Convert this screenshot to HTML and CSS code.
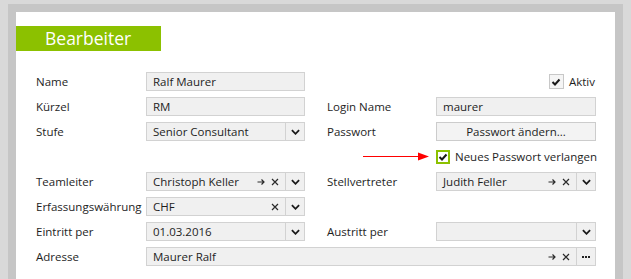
FILE: index.html
```html
<!DOCTYPE html>
<html lang="de">

<head>
    <meta charset="UTF-8">
    <title>Bearbeiter</title>
    <link rel="stylesheet" href="styles.css">
</head>

<body>
    <div class="panel">
        <div class="ribbon">Bearbeiter</div>

        <div class="form">
            <!-- Zeile 1 -->
            <div class="label">Name</div>
            <div class="field">Ralf Maurer</div>
            <div></div>
            <label class="check right">
                <span class="box"><svg viewBox="0 0 10 10"><polyline points="1.5,5 4,7.5 8.5,2.5"></polyline></svg></span>
                Aktiv
            </label>

            <!-- Zeile 2 -->
            <div class="label">Kürzel</div>
            <div class="field">RM</div>
            <div class="label side">Login Name</div>
            <div class="field">maurer</div>

            <!-- Zeile 3 -->
            <div class="label">Stufe</div>
            <div class="field combo">
                <span class="value">Senior Consultant</span>
                <span class="drop"><svg viewBox="0 0 10 6"><polyline points="1,1 5,5 9,1"></polyline></svg></span>
            </div>
            <div class="label side">Passwort</div>
            <div class="button">Passwort ändern...</div>

            <!-- Zeile 4 -->
            <div></div>
            <div></div>
            <div class="pointer">
                <svg width="66" height="9" viewBox="0 0 66 9">
                    <line x1="0" y1="4.5" x2="56" y2="4.5"></line>
                    <polygon points="55,0.5 66,4.5 55,8.5"></polygon>
                </svg>
            </div>
            <label class="check">
                <span class="box marked"><svg viewBox="0 0 10 10"><polyline points="1.5,5 4,7.5 8.5,2.5"></polyline></svg></span>
                Neues Passwort verlangen
            </label>

            <!-- Zeile 5 -->
            <div class="label">Teamleiter</div>
            <div class="field combo">
                <span class="value">Christoph Keller</span>
                <span class="icon go"><svg viewBox="0 0 8 8"><path d="M0.5 4H7M4.5 1.5L7 4L4.5 6.5"></path></svg></span>
                <span class="icon clear"><svg viewBox="0 0 8 8"><path d="M1 1L7 7M7 1L1 7"></path></svg></span>
                <span class="drop"><svg viewBox="0 0 10 6"><polyline points="1,1 5,5 9,1"></polyline></svg></span>
            </div>
            <div class="label side">Stellvertreter</div>
            <div class="field combo">
                <span class="value">Judith Feller</span>
                <span class="icon go"><svg viewBox="0 0 8 8"><path d="M0.5 4H7M4.5 1.5L7 4L4.5 6.5"></path></svg></span>
                <span class="icon clear"><svg viewBox="0 0 8 8"><path d="M1 1L7 7M7 1L1 7"></path></svg></span>
                <span class="drop"><svg viewBox="0 0 10 6"><polyline points="1,1 5,5 9,1"></polyline></svg></span>
            </div>

            <!-- Zeile 6 -->
            <div class="label">Erfassungswährung</div>
            <div class="field combo">
                <span class="value">CHF</span>
                <span class="icon clear"><svg viewBox="0 0 8 8"><path d="M1 1L7 7M7 1L1 7"></path></svg></span>
                <span class="drop"><svg viewBox="0 0 10 6"><polyline points="1,1 5,5 9,1"></polyline></svg></span>
            </div>
            <div></div>
            <div></div>

            <!-- Zeile 7 -->
            <div class="label">Eintritt per</div>
            <div class="field combo">
                <span class="value">01.03.2016</span>
                <span class="drop"><svg viewBox="0 0 10 6"><polyline points="1,1 5,5 9,1"></polyline></svg></span>
            </div>
            <div class="label side">Austritt per</div>
            <div class="field combo">
                <span class="value"></span>
                <span class="drop"><svg viewBox="0 0 10 6"><polyline points="1,1 5,5 9,1"></polyline></svg></span>
            </div>

            <!-- Zeile 8 -->
            <div class="label">Adresse</div>
            <div class="field combo wide">
                <span class="value">Maurer Ralf</span>
                <span class="icon go"><svg viewBox="0 0 8 8"><path d="M0.5 4H7M4.5 1.5L7 4L4.5 6.5"></path></svg></span>
                <span class="icon clear"><svg viewBox="0 0 8 8"><path d="M1 1L7 7M7 1L1 7"></path></svg></span>
                <span class="drop dots"><svg viewBox="0 0 8 2"><rect x="0" y="0" width="2" height="2"></rect><rect x="3" y="0" width="2" height="2"></rect><rect x="6" y="0" width="2" height="2"></rect></svg></span>
            </div>
        </div>
    </div>
</body>

</html>
```

FILE: styles.css
```css
html,
body {
    height: 100%;
}

body {
    margin: 0;
    background: #d9d9d9;
    font-family: 'Open Sans', 'Noto Sans', sans-serif;
    font-size: 11.5px;
    color: #1e1e1e;
}

.panel {
    box-sizing: border-box;
    height: calc(100% - 4px);
    margin: 4px 8px 0 8px;
    border: 8px solid #c6c6c6;
    border-bottom: none;
    background: #ffffff;
    overflow: hidden;
}

.ribbon {
    position: relative;
    width: 150px;
    height: 25px;
    margin: 14px 0 0 -5px;
    padding-left: 34px;
    box-sizing: border-box;
    background: #8cc100;
    color: #ffffff;
    font-size: 17.5px;
    line-height: 25px;
}

.ribbon::after {
    content: "";
    position: absolute;
    left: 0;
    bottom: -5px;
    border-top: 5px solid #4d6a00;
    border-left: 5px solid transparent;
}

.form {
    display: grid;
    grid-template-columns: 110px 159px 131px 160px;
    grid-auto-rows: 19px;
    row-gap: 6px;
    margin: 21px 0 0 20px;
}

.label {
    display: flex;
    align-items: center;
    white-space: nowrap;
}

.label.side {
    padding-left: 22px;
}

.field {
    display: flex;
    align-items: center;
    box-sizing: border-box;
    height: 19px;
    padding-left: 6px;
    background: #f0f0f0;
    border: 1px solid #d2d2d2;
    white-space: nowrap;
}

.field.wide {
    grid-column: 2 / 5;
}

.combo .value {
    flex: 1;
}

.icon {
    display: flex;
    align-items: center;
    justify-content: center;
    width: 8px;
    margin-right: 6px;
}

.icon svg {
    width: 8px;
    height: 8px;
    fill: none;
    stroke: #2a2a2a;
    stroke-width: 1.2;
}

.drop {
    display: flex;
    align-items: center;
    justify-content: center;
    width: 18px;
    height: 100%;
    border-left: 1px solid #d2d2d2;
}

.drop svg {
    width: 9px;
    height: 6px;
    fill: none;
    stroke: #1a1a1a;
    stroke-width: 2;
}

.drop.dots svg {
    width: 8px;
    height: 2px;
    fill: #222222;
    stroke: none;
}

.button {
    display: flex;
    align-items: center;
    justify-content: center;
    box-sizing: border-box;
    height: 19px;
    background: #f3f3f3;
    border: 1px solid #cccccc;
}

.check {
    display: flex;
    align-items: center;
    gap: 5px;
    white-space: nowrap;
}

.check.right {
    grid-column: 4;
    justify-content: flex-end;
    padding-right: 1px;
}

.box {
    display: flex;
    align-items: center;
    justify-content: center;
    flex-shrink: 0;
    box-sizing: border-box;
    width: 15px;
    height: 15px;
    background: #f5f5f5;
    border: 1px solid #c8c8c8;
}

.box.marked {
    width: 14px;
    height: 14px;
    border: 2px solid #8cc100;
    background: #ffffff;
}

.box svg {
    width: 10px;
    height: 10px;
    fill: none;
    stroke: #1a1a1a;
    stroke-width: 2;
}

.pointer {
    display: flex;
    align-items: center;
    justify-content: flex-end;
    padding-right: 7px;
}

.pointer line {
    stroke: #ff0000;
    stroke-width: 1.2;
}

.pointer polygon {
    fill: #ff0000;
}
```
